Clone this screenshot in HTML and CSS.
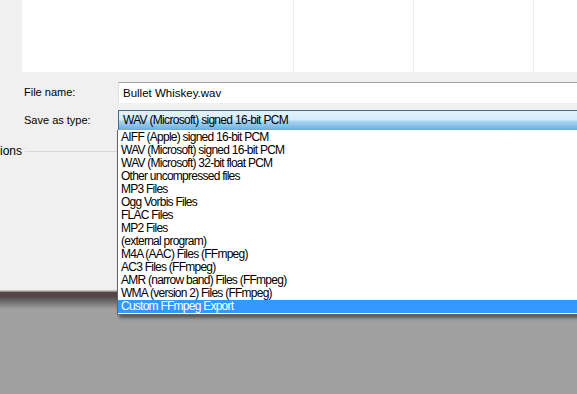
FILE: index.html
```html
<!DOCTYPE html>
<html lang="en">
<head>
    <meta charset="UTF-8">
    <title>Export Audio</title>
    <link rel="stylesheet" href="styles.css">
</head>
<body>

<div class="dialog">
    <div class="browser">
        <div class="col col-name"></div>
        <div class="col"></div>
        <div class="col"></div>
        <div class="col"></div>
    </div>

    <div class="fields">
        <div class="field-row">
            <label class="field-label" for="filename">File name:</label>
            <div class="text-box" id="filename">Bullet Whiskey.wav</div>
        </div>
        <div class="field-row">
            <span class="field-label">Save as type:</span>
            <div class="combo">WAV (Microsoft) signed 16-bit PCM</div>
        </div>
    </div>

    <div class="options">
        <span class="options-title">ions</span>
        <span class="options-line"></span>
    </div>
</div>

<div class="frame-edge"></div>
<div class="desktop"></div>

<ul class="type-list">
    <li>AIFF (Apple) signed 16-bit PCM</li>
    <li>WAV (Microsoft) signed 16-bit PCM</li>
    <li>WAV (Microsoft) 32-bit float PCM</li>
    <li>Other uncompressed files</li>
    <li>MP3 Files</li>
    <li>Ogg Vorbis Files</li>
    <li>FLAC Files</li>
    <li>MP2 Files</li>
    <li>(external program)</li>
    <li>M4A (AAC) Files (FFmpeg)</li>
    <li>AC3 Files (FFmpeg)</li>
    <li>AMR (narrow band) Files (FFmpeg)</li>
    <li>WMA (version 2) Files (FFmpeg)</li>
    <li class="selected">Custom FFmpeg Export</li>
</ul>

</body>
</html>
```

FILE: styles.css
```css
body {
    margin: 0;
    width: 577px;
    height: 394px;
    overflow: hidden;
    position: relative;
    background-color: #a0a0a0;
    font-family: "Liberation Sans", Arial, sans-serif;
    font-size: 11px;
    color: #000;
}
.dialog {
    height: 290px;
    background-color: #f0f0f0;
    border-bottom: 1px solid #c8c4c4;
}
.browser {
    display: flex;
    height: 72px;
    margin-left: 22px;
    overflow: hidden;
    background-color: #fff;
}
.col {
    flex-shrink: 0;
    width: 119px;
    border-left: 1px solid #ececec;
}
.col-name {
    width: 271px;
    border-left: none;
}
.fields {
    padding-top: 9px;
}
.field-row {
    display: flex;
    align-items: center;
    height: 22px;
    margin-bottom: 6px;
}
.field-label {
    width: 94px;
    padding-left: 24px;
    font-size: 11px;
}
.text-box {
    flex: 1;
    height: 20px;
    line-height: 20px;
    padding-left: 4px;
    font-size: 11.5px;
    background-color: #fff;
    border-top: 1px solid #a3a3a3;
    border-left: 1px solid #e2e2e2;
}
.combo {
    flex: 1;
    height: 19px;
    line-height: 19px;
    padding-left: 4px;
    font-size: 12px;
    letter-spacing: -0.7px;
    border: 1px solid #3c6e8e;
    border-right: none;
    background: linear-gradient(#e4f3fc 0%, #d3ecfb 45%, #a9d4f2 55%, #6aaee0 100%);
}
.options {
    display: flex;
    align-items: center;
    margin-top: 13px;
}
.options-title {
    font-size: 12px;
}
.options-line {
    width: 94px;
    margin-left: 3px;
    border-top: 1px solid #d8d8d8;
}
.frame-edge {
    height: 5px;
    background-color: #574446;
    border-top: 1px solid #9a9090;
}
.desktop {
    height: 12px;
    background: linear-gradient(#4e4e4e, #a0a0a0);
}
.type-list {
    position: absolute;
    left: 117px;
    top: 130px;
    width: 460px;
    margin: 0;
    padding: 1px 0 1px 0;
    list-style: none;
    background-color: #fff;
    border-left: 1px solid #646464;
    border-bottom: 1px solid #646464;
    box-shadow: 2px 3px 3px rgba(0, 0, 0, 0.45);
}
.type-list li {
    height: 13px;
    line-height: 13px;
    padding-left: 3px;
    font-size: 12px;
    letter-spacing: -0.75px;
    white-space: nowrap;
}
.type-list li.selected {
    background-color: #3399ff;
    color: #fff;
}
```
